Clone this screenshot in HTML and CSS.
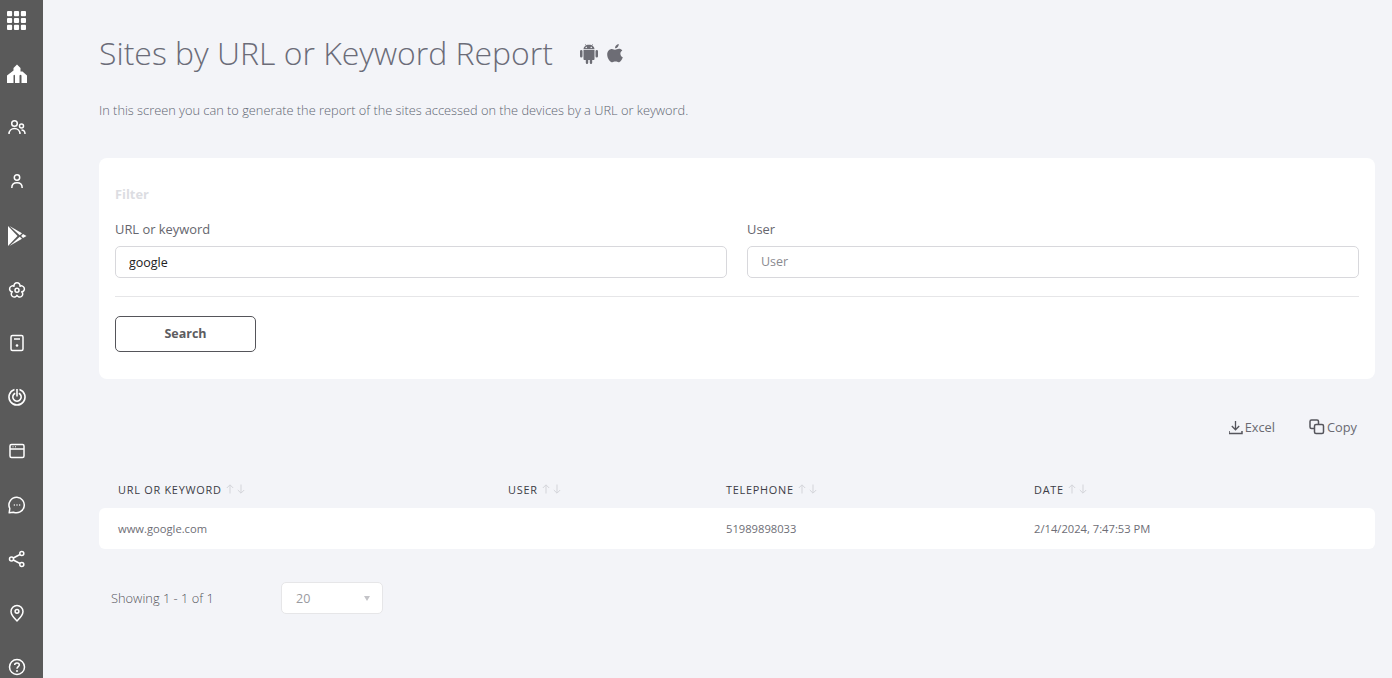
FILE: index.html
```html
<!DOCTYPE html>
<html lang="en">
<head>
<meta charset="utf-8">
<title>Sites by URL or Keyword Report</title>
<link rel="stylesheet" href="styles.css">
</head>
<body>
<div class="app">
  <nav class="sidebar">
    <a class="nav-item"><svg width="19" height="19" viewBox="0 0 20 20" fill="#fff"><rect x="0" y="0" width="5.400" height="5.400" rx="1"/><rect x="7.300" y="0" width="5.400" height="5.400" rx="1"/><rect x="14.600" y="0" width="5.400" height="5.400" rx="1"/><rect x="0" y="7.300" width="5.400" height="5.400" rx="1"/><rect x="7.300" y="7.300" width="5.400" height="5.400" rx="1"/><rect x="14.600" y="7.300" width="5.400" height="5.400" rx="1"/><rect x="0" y="14.600" width="5.400" height="5.400" rx="1"/><rect x="7.300" y="14.600" width="5.400" height="5.400" rx="1"/><rect x="14.600" y="14.600" width="5.400" height="5.400" rx="1"/></svg></a>
    <a class="nav-item"><svg width="20" height="20" viewBox="0 0 20 20" fill="#fff" fill-rule="evenodd"><path d="M10 .5 13.500 4V7.500H15.500L20 11.500V19H0V11.500L6.500 6.500V4ZM6.500 19V11.500Q7.200 10 8 11.500V19ZM12.500 19V11.500Q13.500 9.800 14.500 11.500V19Z"/></svg></a>
    <a class="nav-item"><svg width="18" height="18" viewBox="0 0 18 18" fill="none" stroke="#fff" stroke-width="1.500"><circle cx="6.500" cy="4.500" r="2.800"/><circle cx="13.500" cy="7" r="2"/><path d="M1 15C1 11.500 3.500 9.500 6.500 9.500S12 11.500 12 15"/><path d="M13.500 11C15.500 11 17 12.500 17 15"/></svg></a>
    <a class="nav-item"><svg width="18" height="18" viewBox="0 0 18 18" fill="none" stroke="#fff" stroke-width="1.500"><circle cx="9" cy="4.500" r="2.700"/><path d="M3.800 15C3.800 11.500 6 9.800 9 9.800S14.200 11.500 14.200 15"/></svg></a>
    <a class="nav-item"><svg width="20" height="20" viewBox="0 0 20 20" fill="#fff"><path d="M1 0V20L10.500 10Z"/><path d="M2.500 0 15 7.300 12.700 9.300Z"/><path d="M2.500 20 15 12.700 12.700 10.700Z"/><path d="M16 8 19.500 10 16 12 14.200 10Z"/></svg></a>
    <a class="nav-item"><svg width="18" height="18" viewBox="0 0 18 18" fill="none" stroke="#fff" stroke-width="1.500" stroke-linejoin="round"><path d="M6.060 5.250A3 3 0 1 1 11.940 5.250A3 3 0 1 1 13.760 10.850A3 3 0 1 1 9 14.300A3 3 0 1 1 4.240 10.850A3 3 0 1 1 6.060 5.250Z"/><circle cx="9" cy="9.300" r="2"/></svg></a>
    <a class="nav-item"><svg width="18" height="18" viewBox="0 0 18 18" fill="none" stroke="#fff" stroke-width="1.500"><rect x="3" y="1.500" width="12" height="15" rx="1.500"/><path d="M6 5H12"/><circle cx="9" cy="11.500" r="1.300" fill="#fff" stroke="none"/></svg></a>
    <a class="nav-item"><svg width="18" height="18" viewBox="0 0 18 18" fill="none" stroke="#fff" stroke-width="1.600"><path d="M6.500 1.400A8 8 0 1 0 11.500 1.400"/><path d="M7.200 5.210A4.200 4.200 0 1 0 10.800 5.210"/><path d="M9 1V8.500"/></svg></a>
    <a class="nav-item"><svg width="18" height="18" viewBox="0 0 18 18" fill="none" stroke="#fff" stroke-width="1.500"><rect x="2" y="2.500" width="14" height="13" rx="1.500"/><path d="M2 7H16"/><path d="M4.500 4.800H5.500M7 4.800H8" stroke-width="1"/></svg></a>
    <a class="nav-item"><svg width="18" height="18" viewBox="0 0 18 18" fill="none" stroke="#fff" stroke-width="1.500"><path d="M9 1.200A7.800 7.800 0 1 1 5.500 16.200L1.200 16.800 1.800 12.500A7.800 7.800 0 0 1 9 1.200Z" stroke-linejoin="round"/><path d="M5.800 9H6.800M8.500 9H9.500M11.200 9H12.200" stroke-width="1.300"/></svg></a>
    <a class="nav-item"><svg width="18" height="18" viewBox="0 0 18 18" fill="none" stroke="#fff" stroke-width="1.500"><circle cx="3.500" cy="9" r="2"/><circle cx="13.800" cy="3.500" r="2"/><circle cx="13.800" cy="14.500" r="2"/><path d="M5.300 8 12 4.500M5.300 10 12 13.500"/></svg></a>
    <a class="nav-item"><svg width="18" height="18" viewBox="0 0 18 18" fill="none" stroke="#fff" stroke-width="1.500"><path d="M9 17C6 14 3 11.200 3 7.500A6 6 0 0 1 15 7.500C15 11.200 12 14 9 17Z" stroke-linejoin="round"/><circle cx="9" cy="7.300" r="1.900"/></svg></a>
    <a class="nav-item"><svg width="18" height="18" viewBox="0 0 18 18" fill="none" stroke="#fff" stroke-width="1.500"><circle cx="9" cy="9" r="7.500"/><path d="M6.700 7C6.700 5.700 7.700 4.900 9 4.900S11.300 5.700 11.300 7C11.300 8.600 9 8.700 9 10.700"/><circle cx="9" cy="13" r="1" fill="#fff" stroke="none"/></svg></a>
  </nav>
  <main class="main">
    <header class="page-head">
      <h1 class="page-title">Sites by URL or Keyword Report</h1>
      <span class="platforms">
        <svg width="18" height="21" viewBox="0 0 18 21" fill="#6d6d75"><path d="M3.500 7H14.500V16C14.500 16.600 14 17 13.500 17H12.200V19.700A1.200 1.200 0 0 1 9.800 19.700V17H8.200V19.700A1.200 1.200 0 0 1 5.800 19.700V17H4.500C4 17 3.500 16.600 3.500 16Z"/><path d="M0 8.300A1.200 1.200 0 0 1 2.500 8.300V13.200A1.200 1.200 0 0 1 0 13.200ZM15.500 8.300A1.200 1.200 0 0 1 18 8.300V13.200A1.200 1.200 0 0 1 15.500 13.200Z"/><path d="M3.500 6.200C3.600 4.500 4.500 3.200 5.800 2.500L5 1.200 5.400 1 6.300 2.300C7.800 1.700 10.200 1.700 11.700 2.300L12.600 1 13 1.200 12.200 2.500C13.500 3.200 14.400 4.500 14.500 6.200ZM6.500 3.800A.7.7 0 1 0 6.500 5.100.7.7 0 0 0 6.500 3.800ZM11.500 3.800A.7.7 0 1 0 11.500 5.100.7.700 0 0 0 11.500 3.800Z" fill-rule="evenodd"/></svg>
        <svg width="18" height="21" viewBox="0 0 18 21" fill="#6d6d75"><path d="M13 5.800C14.400 5.800 15.500 6.400 16.300 7.500 14.900 8.400 14.300 9.500 14.400 11 14.500 12.500 15.300 13.600 16.800 14.200 16.100 16.300 14.500 19.300 12.600 19.300 11.600 19.300 10.900 18.600 9.500 18.600 8.100 18.600 7.300 19.300 6.400 19.300 4.300 19.300 1.200 15.500 1.200 11.500 1.200 8 3.500 5.900 5.900 5.900 7.300 5.900 8.500 6.800 9.300 6.800 10.100 6.800 11.500 5.800 13 5.800Z"/><path d="M12.800 1C12.900 3.300 11.200 5.400 9 5.300 8.800 3.200 10.600 1.200 12.800 1Z"/></svg>
      </span>
    </header>
    <p class="page-desc">In this screen you can to generate the report of the sites accessed on the devices by a URL or keyword.</p>

    <section class="filter-card">
      <h2 class="filter-title">Filter</h2>
      <div class="filter-fields">
        <div class="field">
          <label class="field-label">URL or keyword</label>
          <input class="field-input filled" type="text" value="google">
        </div>
        <div class="field">
          <label class="field-label">User</label>
          <input class="field-input" type="text" placeholder="User">
        </div>
      </div>
      <hr class="divider">
      <button class="btn-search" type="button">Search</button>
    </section>

    <div class="actions">
      <a class="action action-excel"><svg width="15" height="15" viewBox="0 0 15 15" fill="none" stroke="#55555c" stroke-width="1.300"><path d="M6.500 1V9.500M2.800 6 6.500 9.800 10.200 6"/><path d="M0 11V13.500H13V11" stroke-width="1.500"/></svg>Excel</a>
      <a class="action"><svg width="16" height="16" viewBox="0 0 16 16" fill="none" stroke="#55555c" stroke-width="1.500"><rect x="1" y="1" width="8.500" height="8.500" rx="1.500"/><rect x="5.500" y="5.500" width="9" height="9" rx="1.500" fill="#f3f4f8"/></svg>Copy</a>
    </div>

    <div class="table">
      <div class="table-head">
        <span class="th">URL OR KEYWORD<svg class="sort" width="22" height="10" viewBox="0 0 22 10" fill="none" stroke="#d3d4d9"><path d="M5 9.500V1M1.800 4 5 .8 8.200 4M16 .5V9M12.800 6 16 9.200 19.200 6"/></svg></span>
        <span class="th">USER<svg class="sort" width="22" height="10" viewBox="0 0 22 10" fill="none" stroke="#d3d4d9"><path d="M5 9.500V1M1.800 4 5 .8 8.200 4M16 .5V9M12.800 6 16 9.200 19.200 6"/></svg></span>
        <span class="th">TELEPHONE<svg class="sort" width="22" height="10" viewBox="0 0 22 10" fill="none" stroke="#d3d4d9"><path d="M5 9.500V1M1.800 4 5 .8 8.200 4M16 .5V9M12.800 6 16 9.200 19.200 6"/></svg></span>
        <span class="th">DATE<svg class="sort" width="22" height="10" viewBox="0 0 22 10" fill="none" stroke="#d3d4d9"><path d="M5 9.500V1M1.800 4 5 .8 8.200 4M16 .5V9M12.800 6 16 9.200 19.200 6"/></svg></span>
      </div>
      <div class="table-row">
        <span class="td">www.google.com</span>
        <span class="td"></span>
        <span class="td">51989898033</span>
        <span class="td">2/14/2024, 7:47:53 PM</span>
      </div>
    </div>

    <div class="pager">
      <span class="pager-info">Showing 1 - 1 of 1</span>
      <div class="pager-select"><span>20</span><i class="caret"></i></div>
    </div>
  </main>
</div>
</body>
</html>
```
FILE: styles.css
```css
* { box-sizing: border-box; }
html, body { margin: 0; height: 100%; overflow: hidden; }
body {
  background: #f3f4f8;
  font-family: "Open Sans", sans-serif;
  color: #5c5c63;
}
.app { display: flex; height: 678px; }
.sidebar {
  width: 43px;
  flex: none;
  background: #5a5a5a;
  display: flex;
  flex-direction: column;
  overflow: hidden;
}
.nav-item {
  flex: none;
  height: 53.900px;
  width: 33px;
  display: flex;
  align-items: center;
  justify-content: center;
}
.nav-item:first-child { height: 40px; margin-bottom: 7px; }
.main { flex: 1; padding: 0 17px 0 56px; min-width: 0; }
.page-head { display: flex; align-items: center; height: 40px; margin-top: 33px; }
.page-title {
  margin: 0;
  font-size: 31.960px;
  font-weight: 300;
  line-height: 40px;
  color: #6b6c78;
}
.platforms { display: flex; gap: 8px; margin-left: 27px; }
.page-desc {
  margin: 27px 0 0;
  font-size: 12.800px;
  font-weight: 300;
  line-height: 20px;
  color: #5f6672;
}
.filter-card {
  margin-top: 38px;
  height: 221px;
  background: #fff;
  border-radius: 8px;
  padding: 28px 16px 0;
}
.filter-title {
  margin: 0;
  font-size: 12.800px;
  line-height: 17px;
  font-weight: 700;
  color: #dcdde2;
}
.filter-fields { display: grid; grid-template-columns: 1fr 1fr; gap: 20px; margin-top: 18px; }
.field-label { display: block; font-size: 12.900px; line-height: 17px; color: #66666e; }
.field-input {
  display: block;
  width: 100%;
  height: 32px;
  margin-top: 8px;
  border: 1px solid #d8d8dc;
  border-radius: 5px;
  padding: 0 13px 2px;
  font-family: inherit;
  font-size: 12.500px;
  background: #fff;
  outline: none;
}
.field-input.filled { color: #222; padding-bottom: 0; }
.field-input::placeholder { color: #8a8a90; opacity: 1; }
.divider { margin: 18px 0 0; border: 0; border-top: 1px solid #e6e6e8; }
.btn-search {
  display: block;
  margin-top: 19px;
  width: 141px;
  height: 36px;
  padding: 0 0 2px;
  background: #fff;
  border: 1px solid #55555a;
  border-radius: 5px;
  font-family: inherit;
  font-size: 12.500px;
  font-weight: 700;
  color: #5c5c60;
}
.actions {
  display: flex;
  justify-content: flex-end;
  gap: 34px;
  padding-right: 18px;
  margin-top: 38px;
  height: 20px;
}
.action { display: flex; align-items: center; gap: 2px; font-size: 12.800px; color: #6a6a72; }
.action-excel { gap: 1px; }
.table { margin-top: 43px; }
.table-head, .table-row { display: grid; grid-template-columns: 390px 218px 308px 1fr; }
.table-head { height: 20px; align-items: center; }
.th {
  padding: 0 0 2px 19px;
  display: flex;
  align-items: center;
  gap: 3px;
  font-size: 10.900px;
  letter-spacing: .75px;
  color: #3c3c46;
}
.table-row {
  margin-top: 8px;
  height: 41px;
  align-items: center;
  background: #fff;
  border-radius: 6px;
}
.td { padding-left: 19px; font-size: 11.200px; color: #6e6e76; }
.pager { display: flex; align-items: center; margin-top: 33px; height: 32px; padding-left: 12px; }
.pager-info { width: 170px; font-size: 12.850px; font-weight: 300; color: #55555c; }
.pager-select {
  width: 102px;
  height: 32px;
  background: #fff;
  border: 1px solid #e6e6e8;
  border-radius: 5px;
  display: flex;
  align-items: center;
  justify-content: space-between;
  padding: 0 12px 0 14px;
  font-size: 12.500px;
  color: #9a9aa0;
}
.caret {
  width: 0;
  height: 0;
  border-left: 3.500px solid transparent;
  border-right: 3.500px solid transparent;
  border-top: 5px solid #c4c4c8;
}
```
